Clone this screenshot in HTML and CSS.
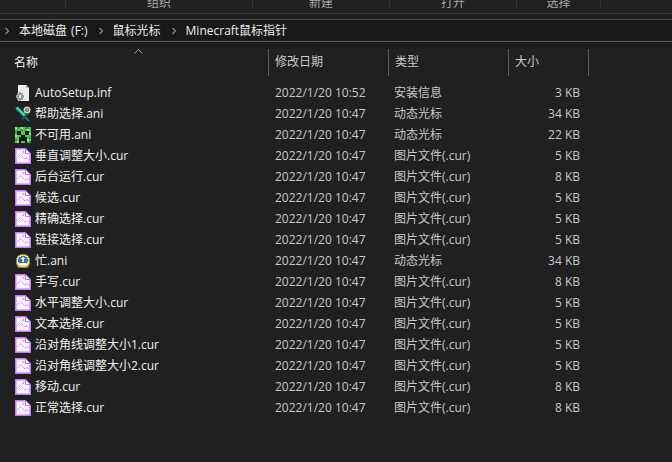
FILE: index.html
```html
<!DOCTYPE html>
<html lang="zh-CN">
<head>
<meta charset="utf-8">
<title>Minecraft鼠标指针</title>
<link rel="stylesheet" href="styles.css">
</head>
<body>
<svg class="defs" width="0" height="0" aria-hidden="true">
  <symbol id="i-cur" viewBox="0 0 16 16">
    <path fill="#f7f2fd" stroke="#c07cff" stroke-width="1.500" d="M.75 .75h9.500l5 5v9.500H.75z"/>
    <path fill="#fff" stroke="#c07cff" d="M10.500 1v4.500H15"/>
    <path fill="none" stroke="#cda6f5" d="M1.500 10.500l4-4 4.500 4.500 2-1.500 3 2.500"/>
    <rect x="7.500" y="3" width="2" height="2" fill="#cda6f5"/>
  </symbol>
  <symbol id="i-inf" viewBox="0 0 16 16" shape-rendering="crispEdges">
    <path fill="#ececec" d="M3 0h8l3 3v13H3z"/>
    <path fill="#a9a9a9" d="M11 0l3 3h-3z"/>
    <path fill="#9a9a9a" d="M4 7h2v1h2v2h1v3H8v2H6v1H4v-1H2v-2H1v-3h1V8h2z"/>
    <rect x="4" y="10" width="2" height="3" fill="#e2e2e2"/>
  </symbol>
  <symbol id="i-help" viewBox="0 0 16 16">
    <path stroke="#2fdcc6" stroke-width="3" d="M1.500 1.500l9 9"/>
    <path stroke="#0f8f7e" stroke-width="1" d="M1 2.500l8.500 9"/>
    <path stroke="#14564e" stroke-width="2" d="M6.500 13.500l7-6"/>
    <path stroke="#1e6e62" stroke-width="2" d="M10 11l4 4"/>
    <circle cx="12" cy="4" r="3.500" fill="#e2d084"/>
    <circle cx="12" cy="4" r="2" fill="#3e6fd0"/>
    <rect x="11.500" y="2.500" width="1" height="2" fill="#f6ec8f"/>
  </symbol>
  <symbol id="i-creeper" viewBox="0 0 8 8" shape-rendering="crispEdges">
    <rect width="8" height="8" fill="#58bd52"/>
    <path fill="#a3e29c" d="M0 0h1v1H0zM3 0h1v1H3zM6 1h1v1H6zM0 4h1v1H0zM7 3h1v1H7zM1 7h1v1H1zM6 6h1v1H6z"/>
    <path fill="#2f9a33" d="M1 0h1v1H1zM5 0h2v1H5zM3 1h1v1H3zM0 2h1v1H0zM7 5h1v1H7zM0 6h1v1H0zM7 7h1v1H7z"/>
    <path fill="#0d1a0d" d="M1 2h2v2H1zM5 2h2v2H5zM3 4h2v1h1v3H5V7H3v1H2V5h1z"/>
  </symbol>
  <symbol id="i-busy" viewBox="0 0 16 16" shape-rendering="crispEdges">
    <path fill="#8b8647" d="M5 1h6v1h2v1h1v2h1v7h-1v2h-1v1H3v-1H2v-2H1V5h1V3h1V2h2z"/>
    <path fill="#f0e07a" d="M5 2h6v1h2v2h1v6h-1v2h-2v1H5v-1H3v-2H2V5h1V3h2z"/>
    <path fill="#2f66d8" d="M6 3h4v1h2v2h1v3h-1v1H4V9H3V6h1V4h2z"/>
    <path fill="#f6e76b" d="M7 4h2v1h1v1H9v3H7V6H6V5h1z"/>
    <path fill="#fff" d="M5 10h6v1h1v1H4v-1h1z"/>
  </symbol>
</svg>

<div class="ribbon">
  <div class="ribbon-group"><span class="ribbon-label">组织</span></div>
  <div class="ribbon-group"><span class="ribbon-label">新建</span></div>
  <div class="ribbon-group"><span class="ribbon-label">打开</span></div>
  <div class="ribbon-group"><span class="ribbon-label">选择</span></div>
</div>

<nav class="address">
  <svg class="chev" viewBox="0 0 6 8"><path d="M1.500 1l3 3-3 3"/></svg>
  <span class="crumb">本地磁盘 (F:)</span>
  <svg class="chev" viewBox="0 0 6 8"><path d="M1.500 1l3 3-3 3"/></svg>
  <span class="crumb">鼠标光标</span>
  <svg class="chev" viewBox="0 0 6 8"><path d="M1.500 1l3 3-3 3"/></svg>
  <span class="crumb">Minecraft鼠标指针</span>
</nav>

<div class="sort-strip"></div>
<div class="row head">
  <span class="cell-name">名称<svg class="caret" viewBox="0 0 9 5"><path d="M.5 4.500l4-4 4 4"/></svg></span>
  <span class="cell-date">修改日期</span>
  <span class="cell-type">类型</span>
  <span class="cell-size">大小</span>
</div>

<div class="list">
  <div class="row"><span class="cell-name"><svg class="ico"><use href="#i-inf"/></svg>AutoSetup.inf</span><span class="cell-date">2022/1/20 10:52</span><span class="cell-type">安装信息</span><span class="cell-size">3 KB</span></div>
  <div class="row"><span class="cell-name"><svg class="ico"><use href="#i-help"/></svg>帮助选择.ani</span><span class="cell-date">2022/1/20 10:47</span><span class="cell-type">动态光标</span><span class="cell-size">34 KB</span></div>
  <div class="row"><span class="cell-name"><svg class="ico"><use href="#i-creeper"/></svg>不可用.ani</span><span class="cell-date">2022/1/20 10:47</span><span class="cell-type">动态光标</span><span class="cell-size">22 KB</span></div>
  <div class="row"><span class="cell-name"><svg class="ico"><use href="#i-cur"/></svg>垂直调整大小.cur</span><span class="cell-date">2022/1/20 10:47</span><span class="cell-type">图片文件(.cur)</span><span class="cell-size">5 KB</span></div>
  <div class="row"><span class="cell-name"><svg class="ico"><use href="#i-cur"/></svg>后台运行.cur</span><span class="cell-date">2022/1/20 10:47</span><span class="cell-type">图片文件(.cur)</span><span class="cell-size">8 KB</span></div>
  <div class="row"><span class="cell-name"><svg class="ico"><use href="#i-cur"/></svg>候选.cur</span><span class="cell-date">2022/1/20 10:47</span><span class="cell-type">图片文件(.cur)</span><span class="cell-size">5 KB</span></div>
  <div class="row"><span class="cell-name"><svg class="ico"><use href="#i-cur"/></svg>精确选择.cur</span><span class="cell-date">2022/1/20 10:47</span><span class="cell-type">图片文件(.cur)</span><span class="cell-size">5 KB</span></div>
  <div class="row"><span class="cell-name"><svg class="ico"><use href="#i-cur"/></svg>链接选择.cur</span><span class="cell-date">2022/1/20 10:47</span><span class="cell-type">图片文件(.cur)</span><span class="cell-size">5 KB</span></div>
  <div class="row"><span class="cell-name"><svg class="ico"><use href="#i-busy"/></svg>忙.ani</span><span class="cell-date">2022/1/20 10:47</span><span class="cell-type">动态光标</span><span class="cell-size">34 KB</span></div>
  <div class="row"><span class="cell-name"><svg class="ico"><use href="#i-cur"/></svg>手写.cur</span><span class="cell-date">2022/1/20 10:47</span><span class="cell-type">图片文件(.cur)</span><span class="cell-size">8 KB</span></div>
  <div class="row"><span class="cell-name"><svg class="ico"><use href="#i-cur"/></svg>水平调整大小.cur</span><span class="cell-date">2022/1/20 10:47</span><span class="cell-type">图片文件(.cur)</span><span class="cell-size">5 KB</span></div>
  <div class="row"><span class="cell-name"><svg class="ico"><use href="#i-cur"/></svg>文本选择.cur</span><span class="cell-date">2022/1/20 10:47</span><span class="cell-type">图片文件(.cur)</span><span class="cell-size">5 KB</span></div>
  <div class="row"><span class="cell-name"><svg class="ico"><use href="#i-cur"/></svg>沿对角线调整大小1.cur</span><span class="cell-date">2022/1/20 10:47</span><span class="cell-type">图片文件(.cur)</span><span class="cell-size">5 KB</span></div>
  <div class="row"><span class="cell-name"><svg class="ico"><use href="#i-cur"/></svg>沿对角线调整大小2.cur</span><span class="cell-date">2022/1/20 10:47</span><span class="cell-type">图片文件(.cur)</span><span class="cell-size">5 KB</span></div>
  <div class="row"><span class="cell-name"><svg class="ico"><use href="#i-cur"/></svg>移动.cur</span><span class="cell-date">2022/1/20 10:47</span><span class="cell-type">图片文件(.cur)</span><span class="cell-size">8 KB</span></div>
  <div class="row"><span class="cell-name"><svg class="ico"><use href="#i-cur"/></svg>正常选择.cur</span><span class="cell-date">2022/1/20 10:47</span><span class="cell-type">图片文件(.cur)</span><span class="cell-size">8 KB</span></div>
</div>
</body>
</html>
```

FILE: styles.css
```css
* { box-sizing: border-box; }

html, body {
  margin: 0;
  height: 100%;
  overflow: hidden;
}

body {
  background: #202020;
  color: #e6e6e6;
  font: 12px/21px "Open Sans", "Noto Sans CJK SC", sans-serif;
}

.defs { position: absolute; }

.ribbon {
  display: grid;
  grid-template-columns: 187px 137px 127px 85px;
  height: 14px;
  padding-left: 65px;
  border-bottom: 1px solid #363636;
  overflow: hidden;
}

.ribbon-group {
  height: 9px;
  border-left: 1px solid #333;
  text-align: center;
  color: #a8a8a8;
}

.ribbon-group:last-child { border-right: 1px solid #333; }

.ribbon-label {
  display: block;
  margin-top: -8px;
}

.address {
  display: flex;
  align-items: center;
  height: 23px;
  margin-top: 5px;
  padding-left: 4px;
  background: #191919;
  border-top: 1px solid #4d4d4d;
  border-bottom: 1px solid #5a5a5a;
  color: #ededed;
  word-spacing: 1px;
}

.chev {
  width: 6px;
  height: 8px;
  fill: none;
  stroke: #8a8a8a;
  stroke-width: 1.200;
  flex: none;
}

.crumb { margin: 0 10px 0 9px; }

.sort-strip {
  height: 7px;
  background: #1d1d1d;
}

.caret {
  position: absolute;
  top: 0;
  left: 134px;
  width: 9px;
  height: 5px;
  fill: none;
  stroke: #a0a0a0;
}

.row {
  display: grid;
  grid-template-columns: 268px 120px 120px 81px;
  height: 21px;
}

.head {
  height: 27px;
  margin-bottom: 6px;
  line-height: 26px;
  color: #c9d3dc;
}

.head span {
  padding-left: 6px;
  border-left: 1px solid #5c5c5c;
}

.head span:first-child {
  position: relative;
  padding-left: 14px;
  border-left: 0;
}

.head span:last-child {
  border-right: 1px solid #5c5c5c;
}

.cell-name {
  display: flex;
  align-items: center;
  padding-left: 15px;
  color: #f0f0f0;
}

.cell-date, .cell-type {
  padding-left: 7px;
  color: #c8c8c8;
}

.cell-type { padding-left: 6px; }

.cell-size {
  padding-right: 9px;
  text-align: right;
  color: #c8c8c8;
}

.head .cell-size { text-align: left; }

.ico {
  width: 16px;
  height: 16px;
  margin-right: 4px;
  flex: none;
}
```
